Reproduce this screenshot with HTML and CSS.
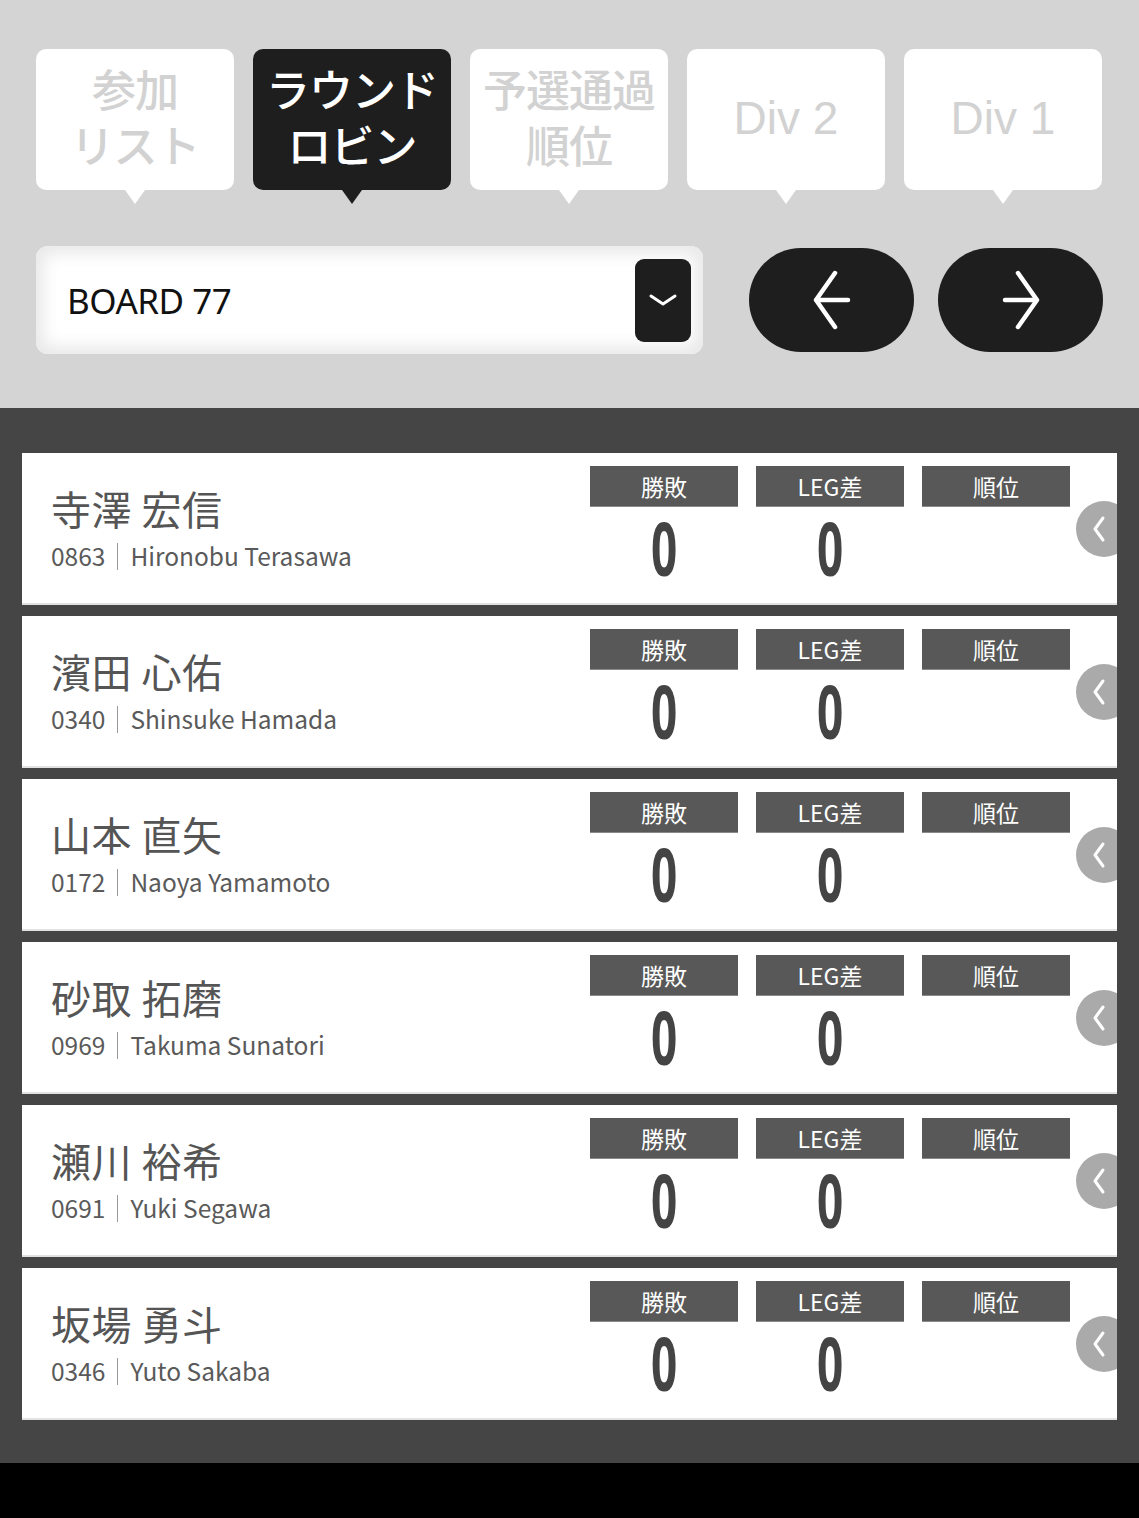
FILE: index.html
```html
<!DOCTYPE html>
<html lang="ja">
<head>
<meta charset="utf-8">
<title>ラウンドロビン</title>
<link rel="stylesheet" href="styles.css">
</head>
<body>
<div class="page">
  <header class="top">
    <nav class="tabs">
      <div class="tab"><div class="tl">参加</div><div class="tl">リスト</div></div>
      <div class="tab active"><div class="tl">ラウンド</div><div class="tl">ロビン</div></div>
      <div class="tab"><div class="tl">予選通過</div><div class="tl">順位</div></div>
      <div class="tab latin">Div 2</div>
      <div class="tab latin">Div 1</div>
    </nav>
    <div class="controls">
      <div class="select">
        <span class="select-text">BOARD 77</span>
        <span class="select-btn">
          <svg width="28" height="14" viewBox="0 0 28 14"><path d="M2 3 L14 11 L26 3" fill="none" stroke="#fff" stroke-width="3" stroke-linecap="round" stroke-linejoin="round"/></svg>
        </span>
      </div>
      <div class="nav-btn">
        <svg width="40" height="60" viewBox="0 0 40 60"><path d="M23 3 L4 30 L23 57 M4 30 H36" fill="none" stroke="#fff" stroke-width="4.5" stroke-linecap="round" stroke-linejoin="round"/></svg>
      </div>
      <div class="nav-btn">
        <svg width="40" height="60" viewBox="0 0 40 60"><path d="M17 3 L36 30 L17 57 M36 30 H4" fill="none" stroke="#fff" stroke-width="4.5" stroke-linecap="round" stroke-linejoin="round"/></svg>
      </div>
    </div>
  </header>

  <main class="list">
    <div class="card">
      <div class="player">
        <div class="name">寺澤 宏信</div>
        <div class="sub"><span>0863</span><i class="sep"></i><span>Hironobu Terasawa</span></div>
      </div>
      <div class="stats">
        <div class="stat"><div class="label">勝敗</div><div class="val"><span>0</span></div></div>
        <div class="stat"><div class="label">LEG差</div><div class="val"><span>0</span></div></div>
        <div class="stat"><div class="label">順位</div><div class="val"></div></div>
      </div>
      <div class="side"><svg width="14" height="28" viewBox="0 0 14 28"><path d="M11 3 L3 14 L11 25" fill="none" stroke="#fff" stroke-width="3" stroke-linecap="round" stroke-linejoin="round"/></svg></div>
    </div>

    <div class="card">
      <div class="player">
        <div class="name">濱田 心佑</div>
        <div class="sub"><span>0340</span><i class="sep"></i><span>Shinsuke Hamada</span></div>
      </div>
      <div class="stats">
        <div class="stat"><div class="label">勝敗</div><div class="val"><span>0</span></div></div>
        <div class="stat"><div class="label">LEG差</div><div class="val"><span>0</span></div></div>
        <div class="stat"><div class="label">順位</div><div class="val"></div></div>
      </div>
      <div class="side"><svg width="14" height="28" viewBox="0 0 14 28"><path d="M11 3 L3 14 L11 25" fill="none" stroke="#fff" stroke-width="3" stroke-linecap="round" stroke-linejoin="round"/></svg></div>
    </div>

    <div class="card">
      <div class="player">
        <div class="name">山本 直矢</div>
        <div class="sub"><span>0172</span><i class="sep"></i><span>Naoya Yamamoto</span></div>
      </div>
      <div class="stats">
        <div class="stat"><div class="label">勝敗</div><div class="val"><span>0</span></div></div>
        <div class="stat"><div class="label">LEG差</div><div class="val"><span>0</span></div></div>
        <div class="stat"><div class="label">順位</div><div class="val"></div></div>
      </div>
      <div class="side"><svg width="14" height="28" viewBox="0 0 14 28"><path d="M11 3 L3 14 L11 25" fill="none" stroke="#fff" stroke-width="3" stroke-linecap="round" stroke-linejoin="round"/></svg></div>
    </div>

    <div class="card">
      <div class="player">
        <div class="name">砂取 拓磨</div>
        <div class="sub"><span>0969</span><i class="sep"></i><span>Takuma Sunatori</span></div>
      </div>
      <div class="stats">
        <div class="stat"><div class="label">勝敗</div><div class="val"><span>0</span></div></div>
        <div class="stat"><div class="label">LEG差</div><div class="val"><span>0</span></div></div>
        <div class="stat"><div class="label">順位</div><div class="val"></div></div>
      </div>
      <div class="side"><svg width="14" height="28" viewBox="0 0 14 28"><path d="M11 3 L3 14 L11 25" fill="none" stroke="#fff" stroke-width="3" stroke-linecap="round" stroke-linejoin="round"/></svg></div>
    </div>

    <div class="card">
      <div class="player">
        <div class="name">瀬川 裕希</div>
        <div class="sub"><span>0691</span><i class="sep"></i><span>Yuki Segawa</span></div>
      </div>
      <div class="stats">
        <div class="stat"><div class="label">勝敗</div><div class="val"><span>0</span></div></div>
        <div class="stat"><div class="label">LEG差</div><div class="val"><span>0</span></div></div>
        <div class="stat"><div class="label">順位</div><div class="val"></div></div>
      </div>
      <div class="side"><svg width="14" height="28" viewBox="0 0 14 28"><path d="M11 3 L3 14 L11 25" fill="none" stroke="#fff" stroke-width="3" stroke-linecap="round" stroke-linejoin="round"/></svg></div>
    </div>

    <div class="card">
      <div class="player">
        <div class="name">坂場 勇斗</div>
        <div class="sub"><span>0346</span><i class="sep"></i><span>Yuto Sakaba</span></div>
      </div>
      <div class="stats">
        <div class="stat"><div class="label">勝敗</div><div class="val"><span>0</span></div></div>
        <div class="stat"><div class="label">LEG差</div><div class="val"><span>0</span></div></div>
        <div class="stat"><div class="label">順位</div><div class="val"></div></div>
      </div>
      <div class="side"><svg width="14" height="28" viewBox="0 0 14 28"><path d="M11 3 L3 14 L11 25" fill="none" stroke="#fff" stroke-width="3" stroke-linecap="round" stroke-linejoin="round"/></svg></div>
    </div>
  </main>
  <footer class="bottom"></footer>
</div>
</body>
</html>
```

FILE: styles.css
```css
* { box-sizing: border-box; }
html, body { margin: 0; padding: 0; }
body {
  background: #000;
  font-family: "Noto Sans CJK JP", "Noto Sans", sans-serif;
  width: 1139px;
}
.page { width: 1139px; }

.top {
  background: #d4d4d4;
  height: 408px;
  padding: 49px 36px 0 36px;
}
.tabs {
  display: flex;
  gap: 19px;
  height: 141px;
}
.tab {
  position: relative;
  width: 198px;
  height: 141px;
  background: #fff;
  border-radius: 10px;
  color: #d2d2d2;
  font-size: 44px;
  font-weight: 500;
  text-align: center;
  display: flex;
  flex-direction: column;
  align-items: center;
  justify-content: center;
  letter-spacing: -1px;
  padding-bottom: 8px;
}
.tl {
  line-height: 56px;
  white-space: nowrap;
}
.tab::after {
  content: "";
  position: absolute;
  left: 50%;
  bottom: -14px;
  margin-left: -10px;
  border-left: 10px solid transparent;
  border-right: 10px solid transparent;
  border-top: 14px solid #fff;
}
.tab.active { background: #1e1e1e; color: #fff; }
.tab.active::after { border-top-color: #1e1e1e; }
.tab.latin {
  font-family: "Liberation Sans", Arial, sans-serif;
  font-size: 46px;
  font-weight: 400;
  letter-spacing: 0;
  padding-bottom: 4px;
}

.controls {
  display: flex;
  align-items: center;
  margin-top: 56px;
  height: 108px;
}
.select {
  width: 667px;
  height: 108px;
  background: #fff;
  border-radius: 12px;
  box-shadow: inset 0 0 16px 8px #e9e9e9;
  display: flex;
  align-items: center;
  justify-content: space-between;
  padding: 0 12px 0 31px;
}
.select-text {
  font-family: "Noto Sans", sans-serif;
  font-size: 35px;
  color: #111;
  letter-spacing: -0.5px;
}
.select-btn {
  width: 56px;
  height: 83px;
  background: #1e1e1e;
  border-radius: 9px;
  display: flex;
  align-items: center;
  justify-content: center;
}
.nav-btn {
  width: 165px;
  height: 104px;
  border-radius: 52px / 52px;
  background: #1e1e1e;
  display: flex;
  align-items: center;
  justify-content: center;
  margin-left: 24px;
}
.select + .nav-btn { margin-left: 46px; }

.list {
  background: #454545;
  padding: 45px 22px 43px 22px;
  display: flex;
  flex-direction: column;
  gap: 11px;
}
.card {
  position: relative;
  overflow: hidden;
  height: 152px;
  background: #fff;
  border-bottom: 2px solid #e2e2e2;
  display: flex;
  justify-content: space-between;
}
.player {
  padding: 31px 0 0 29px;
  color: #555;
}
.name {
  font-size: 40px;
  line-height: 48px;
  letter-spacing: 0.5px;
}
.sub {
  margin-top: 8px;
  font-size: 24.5px;
  line-height: 32px;
  display: flex;
  align-items: center;
  color: #5a5a5a;
}
.sep {
  display: inline-block;
  width: 1px;
  height: 27px;
  background: #9a9a9a;
  margin: 0 12px 0 12px;
}
.stats {
  display: flex;
  gap: 18px;
  padding: 13px 47px 0 0;
}
.stat { width: 148px; }
.label {
  height: 41px;
  background: #585858;
  color: #fff;
  font-size: 23px;
  line-height: 41px;
  text-align: center;
  border-bottom: 1px solid #8a8a8a;
}
.val {
  margin-top: 5px;
  height: 72px;
  text-align: center;
  font-family: "Noto Sans", sans-serif;
  font-size: 74px;
  line-height: 72px;
  font-weight: 700;
  color: #444;
}
.val span {
  display: inline-block;
  transform: scaleX(0.62);
}
.side {
  position: absolute;
  top: 48px;
  right: -15px;
  width: 56px;
  height: 56px;
  border-radius: 50%;
  background: #aaa;
  display: flex;
  align-items: center;
  padding-left: 16px;
}

.bottom {
  height: 55px;
  background: #000;
}
```
